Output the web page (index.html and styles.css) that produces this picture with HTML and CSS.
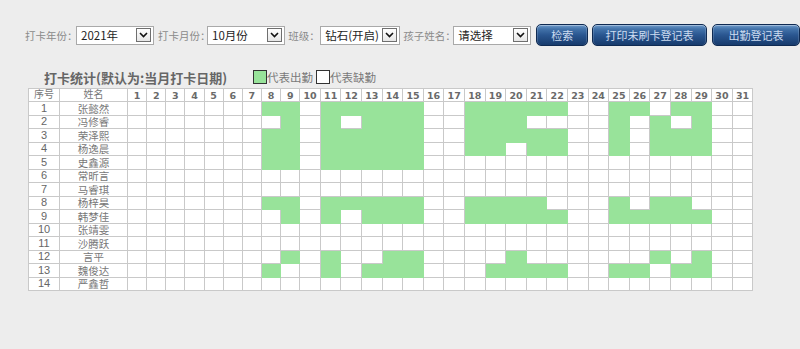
FILE: index.html
```html
<!DOCTYPE html>
<html lang="zh-CN">
<head>
<meta charset="utf-8">
<title>打卡统计</title>
<link rel="stylesheet" href="styles.css">
</head>
<body>
<div class="toolbar">
  <span class="lbl l-year">打卡年份：</span>
  <div class="sel s-year"><span class="val">2021年</span><span class="arr"><svg width="9" height="6" viewBox="0 0 9 6"><polyline points="1,1 4.5,4.5 8,1" fill="none" stroke="#111" stroke-width="1.6"/></svg></span></div>
  <span class="lbl l-month">打卡月份：</span>
  <div class="sel s-month"><span class="val">10月份</span><span class="arr"><svg width="9" height="6" viewBox="0 0 9 6"><polyline points="1,1 4.5,4.5 8,1" fill="none" stroke="#111" stroke-width="1.6"/></svg></span></div>
  <span class="lbl l-class">班级：</span>
  <div class="sel s-class"><span class="val">钻石(开启)</span><span class="arr"><svg width="9" height="6" viewBox="0 0 9 6"><polyline points="1,1 4.5,4.5 8,1" fill="none" stroke="#111" stroke-width="1.6"/></svg></span></div>
  <span class="lbl l-child">孩子姓名：</span>
  <div class="sel s-child"><span class="val">请选择</span><span class="arr"><svg width="9" height="6" viewBox="0 0 9 6"><polyline points="1,1 4.5,4.5 8,1" fill="none" stroke="#111" stroke-width="1.6"/></svg></span></div>
  <button class="btn b-search">检索</button>
  <button class="btn b-print">打印未刷卡登记表</button>
  <button class="btn b-sheet">出勤登记表</button>
</div>

<div class="stats-head">
  <h2 class="title">打卡统计(默认为:当月打卡日期)</h2>
  <div class="legend">
    <span class="box box-on"></span><span class="legend-text">代表出勤</span>
    <span class="box box-off"></span><span class="legend-text">代表缺勤</span>
  </div>
</div>

<table class="grid">
  <colgroup>
    <col class="c-no"><col class="c-name">
    <col class="c-d1"><col class="c-d1"><col class="c-d1"><col class="c-d1"><col class="c-d1"><col class="c-d1"><col class="c-d1"><col class="c-d1"><col class="c-d1">
    <col class="c-d2"><col class="c-d2"><col class="c-d2"><col class="c-d2"><col class="c-d2"><col class="c-d2"><col class="c-d2"><col class="c-d2"><col class="c-d2"><col class="c-d2"><col class="c-d2">
    <col class="c-d2"><col class="c-d2"><col class="c-d2"><col class="c-d2"><col class="c-d2"><col class="c-d2"><col class="c-d2"><col class="c-d2"><col class="c-d2"><col class="c-d2"><col class="c-d2">
  </colgroup>
  <thead>
    <tr>
      <th class="h-cn">序号</th><th class="h-cn">姓名</th>
      <th>1</th><th>2</th><th>3</th><th>4</th><th>5</th><th>6</th><th>7</th><th>8</th><th>9</th><th>10</th>
      <th>11</th><th>12</th><th>13</th><th>14</th><th>15</th><th>16</th><th>17</th><th>18</th><th>19</th><th>20</th>
      <th>21</th><th>22</th><th>23</th><th>24</th><th>25</th><th>26</th><th>27</th><th>28</th><th>29</th><th>30</th><th>31</th>
    </tr>
  </thead>
  <tbody>
    <tr><td class="no">1</td><td class="name">张懿然</td>
      <td></td><td></td><td></td><td></td><td></td><td></td><td></td>
      <td class="p"></td><td class="p"></td><td></td><td class="p"></td><td class="p"></td><td class="p"></td><td class="p"></td><td class="p"></td>
      <td></td><td></td><td class="p"></td><td class="p"></td><td class="p"></td><td class="p"></td><td class="p"></td>
      <td></td><td></td><td class="p"></td><td class="p"></td><td></td><td class="p"></td><td class="p"></td><td></td><td></td></tr>
    <tr><td class="no">2</td><td class="name">冯修睿</td>
      <td></td><td></td><td></td><td></td><td></td><td></td><td></td>
      <td></td><td class="p"></td><td></td><td class="p"></td><td></td><td class="p"></td><td class="p"></td><td class="p"></td>
      <td></td><td></td><td class="p"></td><td class="p"></td><td class="p"></td><td></td><td></td>
      <td></td><td></td><td class="p"></td><td></td><td class="p"></td><td></td><td class="p"></td><td></td><td></td></tr>
    <tr><td class="no">3</td><td class="name">荣泽熙</td>
      <td></td><td></td><td></td><td></td><td></td><td></td><td></td>
      <td class="p"></td><td class="p"></td><td></td><td class="p"></td><td class="p"></td><td class="p"></td><td class="p"></td><td class="p"></td>
      <td></td><td></td><td class="p"></td><td class="p"></td><td class="p"></td><td class="p"></td><td class="p"></td>
      <td></td><td></td><td class="p"></td><td></td><td class="p"></td><td class="p"></td><td class="p"></td><td></td><td></td></tr>
    <tr><td class="no">4</td><td class="name">杨逸晨</td>
      <td></td><td></td><td></td><td></td><td></td><td></td><td></td>
      <td class="p"></td><td class="p"></td><td></td><td class="p"></td><td class="p"></td><td class="p"></td><td class="p"></td><td class="p"></td>
      <td></td><td></td><td class="p"></td><td class="p"></td><td></td><td class="p"></td><td class="p"></td>
      <td></td><td></td><td class="p"></td><td></td><td class="p"></td><td class="p"></td><td class="p"></td><td></td><td></td></tr>
    <tr><td class="no">5</td><td class="name">史鑫源</td>
      <td></td><td></td><td></td><td></td><td></td><td></td><td></td>
      <td class="p"></td><td class="p"></td><td></td><td class="p"></td><td class="p"></td><td class="p"></td><td class="p"></td><td class="p"></td>
      <td></td><td></td><td></td><td></td><td></td><td></td><td></td>
      <td></td><td></td><td></td><td></td><td></td><td></td><td></td><td></td><td></td></tr>
    <tr><td class="no">6</td><td class="name">常昕言</td>
      <td></td><td></td><td></td><td></td><td></td><td></td><td></td>
      <td></td><td></td><td></td><td></td><td></td><td></td><td></td><td></td>
      <td></td><td></td><td></td><td></td><td></td><td></td><td></td>
      <td></td><td></td><td></td><td></td><td></td><td></td><td></td><td></td><td></td></tr>
    <tr><td class="no">7</td><td class="name">马睿琪</td>
      <td></td><td></td><td></td><td></td><td></td><td></td><td></td>
      <td></td><td></td><td></td><td></td><td></td><td></td><td></td><td></td>
      <td></td><td></td><td></td><td></td><td></td><td></td><td></td>
      <td></td><td></td><td></td><td></td><td></td><td></td><td></td><td></td><td></td></tr>
    <tr><td class="no">8</td><td class="name">杨梓昊</td>
      <td></td><td></td><td></td><td></td><td></td><td></td><td></td>
      <td class="p"></td><td class="p"></td><td></td><td class="p"></td><td class="p"></td><td class="p"></td><td class="p"></td><td class="p"></td>
      <td></td><td></td><td class="p"></td><td class="p"></td><td class="p"></td><td class="p"></td><td></td>
      <td></td><td></td><td class="p"></td><td></td><td class="p"></td><td class="p"></td><td></td><td></td><td></td></tr>
    <tr><td class="no">9</td><td class="name">韩梦佳</td>
      <td></td><td></td><td></td><td></td><td></td><td></td><td></td>
      <td></td><td class="p"></td><td></td><td class="p"></td><td></td><td class="p"></td><td class="p"></td><td class="p"></td>
      <td></td><td></td><td class="p"></td><td class="p"></td><td class="p"></td><td class="p"></td><td class="p"></td>
      <td></td><td></td><td class="p"></td><td class="p"></td><td class="p"></td><td class="p"></td><td class="p"></td><td></td><td></td></tr>
    <tr><td class="no">10</td><td class="name">张靖雯</td>
      <td></td><td></td><td></td><td></td><td></td><td></td><td></td>
      <td></td><td></td><td></td><td></td><td></td><td></td><td></td><td></td>
      <td></td><td></td><td></td><td></td><td></td><td></td><td></td>
      <td></td><td></td><td></td><td></td><td></td><td></td><td></td><td></td><td></td></tr>
    <tr><td class="no">11</td><td class="name">沙腾跃</td>
      <td></td><td></td><td></td><td></td><td></td><td></td><td></td>
      <td></td><td></td><td></td><td></td><td></td><td></td><td></td><td></td>
      <td></td><td></td><td></td><td></td><td></td><td></td><td></td>
      <td></td><td></td><td></td><td></td><td></td><td></td><td></td><td></td><td></td></tr>
    <tr><td class="no">12</td><td class="name">言平</td>
      <td></td><td></td><td></td><td></td><td></td><td></td><td></td>
      <td></td><td class="p"></td><td></td><td class="p"></td><td></td><td></td><td class="p"></td><td class="p"></td>
      <td></td><td></td><td></td><td></td><td class="p"></td><td></td><td></td>
      <td></td><td></td><td></td><td></td><td class="p"></td><td></td><td class="p"></td><td></td><td></td></tr>
    <tr><td class="no">13</td><td class="name">魏俊达</td>
      <td></td><td></td><td></td><td></td><td></td><td></td><td></td>
      <td class="p"></td><td></td><td></td><td class="p"></td><td></td><td class="p"></td><td class="p"></td><td class="p"></td>
      <td></td><td></td><td></td><td class="p"></td><td class="p"></td><td class="p"></td><td class="p"></td>
      <td></td><td></td><td class="p"></td><td class="p"></td><td></td><td class="p"></td><td class="p"></td><td></td><td></td></tr>
    <tr><td class="no">14</td><td class="name">严鑫哲</td>
      <td></td><td></td><td></td><td></td><td></td><td></td><td></td>
      <td></td><td></td><td></td><td></td><td></td><td></td><td></td><td></td>
      <td></td><td></td><td></td><td></td><td></td><td></td><td></td>
      <td></td><td></td><td></td><td></td><td></td><td></td><td></td><td></td><td></td></tr>
  </tbody>
</table>
</body>
</html>
```
FILE: styles.css
```css
html, body {
  margin: 0;
  padding: 0;
  overflow: hidden;
  background: #ededed;
}
body {
  font-family: "Noto Sans CJK SC", "Noto Sans", sans-serif;
  color: #555;
}

/* ---------- toolbar ---------- */
.toolbar {
  display: flex;
  align-items: center;
  height: 22px;
  margin: 24px 0 0 25px;
  white-space: nowrap;
}
.lbl {
  font-size: 10.5px;
  color: #8a8a8a;
  line-height: 19px;
}
.l-year { width: 48px; margin-right: 3px; }
.l-month { width: 46px; margin-left: 4px; margin-right: 3px; }
.l-class { width: 30px; margin-left: 3px; margin-right: 2px; }
.l-child { width: 48px; margin-left: 3px; margin-right: 2px; }

.sel {
  box-sizing: border-box;
  height: 19px;
  border: 1px solid #a9a9a9;
  background: #fff;
  display: flex;
  align-items: center;
  justify-content: space-between;
  padding: 0 2px 0 4px;
}
.s-year { width: 80px; }
.s-month { width: 80px; }
.s-class { width: 82px; }
.s-child { width: 80px; }
.val {
  font-size: 11.5px;
  color: #1e1e1e;
  line-height: 17px;
}
.arr {
  box-sizing: border-box;
  width: 15px;
  height: 14px;
  border: 1px solid #6f6f6f;
  background: linear-gradient(#ffffff, #e6e6e6);
  display: flex;
  align-items: center;
  justify-content: center;
  flex-shrink: 0;
}

.btn {
  box-sizing: border-box;
  height: 22px;
  border: 1px solid #0f2a52;
  border-radius: 5px;
  background: linear-gradient(#6f9bcb 0%, #4373aa 20%, #2a5690 50%, #173b6d 100%);
  box-shadow: inset 0 1px 0 rgba(255,255,255,0.35), inset 1px 0 0 rgba(255,255,255,0.15), inset -1px 0 0 rgba(255,255,255,0.15);
  color: #cddcf0;
  font-family: "Noto Sans CJK SC", sans-serif;
  font-size: 11px;
  padding: 0;
  line-height: 20px;
  text-align: center;
}
.b-search { width: 53px; margin-left: 5px; }
.b-print { width: 118px; margin-left: 4px; }
.b-sheet { width: 88px; margin-left: 5px; flex-shrink: 0; }

/* ---------- heading ---------- */
.stats-head {
  display: flex;
  align-items: center;
  height: 20px;
  margin: 22px 0 0 44px;
}
.title {
  margin: 0;
  width: 209px;
  font-size: 13px;
  font-weight: bold;
  color: #666;
  line-height: 20px;
  letter-spacing: 0;
  white-space: nowrap;
}
.legend {
  display: flex;
  align-items: center;
  padding-bottom: 3px;
}
.box {
  box-sizing: border-box;
  width: 14px;
  height: 14px;
  border: 1px solid #333;
}
.box-on { background: #98e39a; }
.box-off { background: #fff; margin-left: 3px; }
.legend-text {
  font-size: 11.5px;
  color: #7a7a7a;
  line-height: 14px;
}

/* ---------- grid ---------- */
.grid {
  margin-left: 28px;
  border-collapse: collapse;
  table-layout: fixed;
  width: 724.5px;
  background: #fff;
}
.c-no { width: 31px; }
.c-name { width: 68px; }
.c-d1 { width: 19.15px; }
.c-d2 { width: 20.6px; }

.grid th, .grid td {
  border: 1px solid #c9c9c9;
  padding: 0;
  text-align: center;
  white-space: nowrap;
}
.grid thead tr { height: 13px; }
.grid tbody tr { height: 13.5px; }
.grid th {
  font-family: "DejaVu Sans", Verdana, sans-serif;
  font-size: 9.5px;
  font-weight: bold;
  color: #6a6a6a;
  line-height: 11px;
}
.grid th.h-cn {
  font-family: "Noto Sans CJK SC", sans-serif;
  font-weight: normal;
  font-size: 10px;
  line-height: 10px;
  padding-bottom: 2px;
  color: #777;
}
.grid td {
  font-size: 10.5px;
  line-height: 11px;
  color: #666;
}
.grid td.no {
  font-family: "Liberation Sans", Arial, sans-serif;
  font-size: 11px;
}
.grid td.name {
  font-family: "Noto Sans CJK SC", sans-serif;
  color: #777;
}
.grid td.p {
  background: #98e39a;
  border-color: #98e39a;
}
```
